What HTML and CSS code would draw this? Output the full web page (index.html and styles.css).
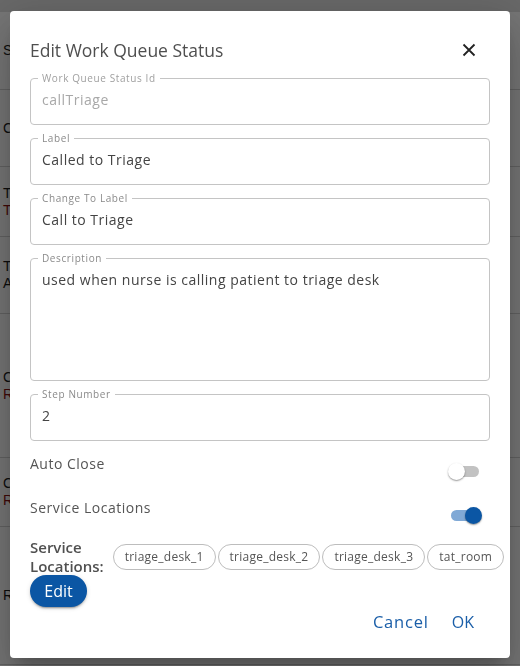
FILE: index.html
```html
<!DOCTYPE html>
<html>
<head>
<meta charset="utf-8">
<link rel="stylesheet" href="styles.css">
</head>
<body>
<div class="page">
  <div class="page-header"></div>
  <div class="row r1"><span>S</span></div>
  <div class="row r2"><span>C</span></div>
  <div class="row r3"><span>T</span><span class="red">T</span></div>
  <div class="row r4"><span>T</span><span>A</span></div>
  <div class="row r5"><span>C</span><span class="red">R</span></div>
  <div class="row r6"><span>C</span><span class="red">R</span></div>
  <div class="row r7"><span>R</span></div>
</div>
<div class="backdrop"></div>
<div class="dialog">
  <div class="dialog-title">
    <h2>Edit Work Queue Status</h2>
    <svg class="close" width="14" height="14" viewBox="0 0 14 14"><path d="M1.5 1.5L12.5 12.5M12.5 1.5L1.5 12.5" stroke="#222" stroke-width="1.8" fill="none"/></svg>
  </div>
  <div class="dialog-body">
    <fieldset class="field disabled">
      <legend>Work Queue Status Id</legend>
      <div class="value">callTriage</div>
    </fieldset>
    <fieldset class="field">
      <legend>Label</legend>
      <div class="value">Called to Triage</div>
    </fieldset>
    <fieldset class="field">
      <legend>Change To Label</legend>
      <div class="value">Call to Triage</div>
    </fieldset>
    <fieldset class="field">
      <legend>Description</legend>
      <div class="value multiline">used when nurse is calling patient to triage desk</div>
    </fieldset>
    <fieldset class="field">
      <legend>Step Number</legend>
      <div class="value">2</div>
    </fieldset>
    <div class="toggle-row first">
      <span class="toggle-label">Auto Close</span>
      <div class="switch"><div class="track"><div class="thumb"></div></div></div>
    </div>
    <div class="toggle-row">
      <span class="toggle-label">Service Locations</span>
      <div class="switch on"><div class="track"><div class="thumb"></div></div></div>
    </div>
    <div class="locations">
      <div class="loc-label">Service<br>Locations:</div>
      <div class="chips">
        <span class="chip">triage_desk_1</span>
        <span class="chip">triage_desk_2</span>
        <span class="chip">triage_desk_3</span>
        <span class="chip">tat_room</span>
      </div>
    </div>
    <button class="edit-btn">Edit</button>
  </div>
  <div class="actions">
    <button class="text-btn cancel">Cancel</button>
    <button class="text-btn">OK</button>
  </div>
</div>
</body>
</html>
```
FILE: styles.css
```css
html, body {
  margin: 0;
  padding: 0;
  width: 520px;
  height: 666px;
  overflow: hidden;
  background: #ffffff;
}
.page {
  font-family: "Liberation Sans", Arial, sans-serif;
  font-size: 14px;
  color: #1a1a1a;
}
.page-header {
  height: 12px;
  background: #e2e2e2;
}
.row {
  display: flex;
  flex-direction: column;
  justify-content: center;
  padding-left: 3px;
  border-bottom: 1px solid #d4d4d4;
  line-height: 17px;
  white-space: nowrap;
}
.row .red { color: #8a1010; }
.r1 { height: 77px; }
.r2 { height: 76px; }
.r3 { height: 69px; }
.r4 { height: 76px; }
.r5 { height: 143px; }
.r6 { height: 68px; }
.r7 { height: 137px; }

.backdrop {
  position: fixed;
  inset: 0;
  background: rgba(0, 0, 0, 0.54);
}
.dialog {
  position: fixed;
  left: 10px;
  top: 11px;
  width: 500px;
  height: 647px;
  background: #fff;
  border-radius: 4px;
  box-shadow: 0 11px 15px -7px rgba(0,0,0,0.2), 0 24px 38px 3px rgba(0,0,0,0.14), 0 9px 46px 8px rgba(0,0,0,0.12);
  font-family: "Open Sans", "Noto Sans", sans-serif;
  color: #555;
  box-sizing: border-box;
  display: flex;
  flex-direction: column;
}
.dialog-title {
  display: flex;
  align-items: center;
  justify-content: space-between;
  padding: 27px 34px 0 20px;
}
.dialog-title h2 {
  margin: 0;
  font-size: 17.5px;
  line-height: 24px;
  font-weight: 500;
  color: #4f4f4f;
}
.close { display: block; }
.dialog-body {
  padding: 10px 20px 0 20px;
  display: flex;
  flex-direction: column;
}
.field {
  margin: 0 0 7px 0;
  padding: 0 11px;
  border: 1px solid #c4c4c4;
  border-radius: 4px;
  min-width: 0;
}
.field legend {
  font-size: 10px;
  line-height: 12px;
  padding: 0 4px;
  margin-left: -4px;
  color: #8a8a8a;
  letter-spacing: 0.6px;
}
.field.disabled legend { color: #a0a0a0; }
.value {
  font-size: 14px;
  line-height: 24px;
  padding: 4px 0 12px 0;
  color: #444;
  letter-spacing: 0.5px;
}
.field.disabled .value { color: #a8a8a8; }
.value.multiline { padding-bottom: 88px; }
.field:last-of-type { margin-bottom: 0; }

.toggle-row {
  display: flex;
  justify-content: space-between;
  align-items: flex-start;
  margin-top: 16px;
  padding-right: 8px;
}
.toggle-row.first { margin-top: 11px; }
.toggle-label {
  font-size: 14px;
  line-height: 24px;
  color: #555;
  letter-spacing: 0.5px;
}
.switch {
  margin-top: 11px;
  width: 34px;
  height: 17px;
  display: flex;
  align-items: center;
}
.track {
  width: 28px;
  height: 11px;
  margin: 0 3px;
  border-radius: 6px;
  background: #c2c2c2;
  display: flex;
  align-items: center;
}
.thumb {
  flex-shrink: 0;
  width: 17px;
  height: 17px;
  border-radius: 50%;
  background: #fff;
  margin-left: -3px;
  box-shadow: 0 1px 2px rgba(0,0,0,0.3), 0 1px 1px rgba(0,0,0,0.14);
}
.switch.on .track {
  background: #80a9d6;
  justify-content: flex-end;
}
.switch.on .thumb {
  background: #0b56a4;
  margin-left: 0;
  margin-right: -3px;
}
.locations {
  display: flex;
  align-items: center;
  margin-top: 14px;
  width: 480px;
}
.loc-label {
  font-size: 15px;
  line-height: 19px;
  font-weight: 600;
  color: #505050;
  margin-right: 9px;
}
.chips {
  display: flex;
  gap: 2px;
  white-space: nowrap;
}
.chip {
  display: inline-block;
  height: 24px;
  line-height: 24px;
  padding: 0 11px;
  border: 1px solid #bdbdbd;
  border-radius: 13px;
  font-size: 12px;
  color: #555;
  letter-spacing: 0.25px;
}
.edit-btn {
  align-self: flex-start;
  margin-top: -1px;
  height: 32px;
  width: 57px;
  border: none;
  border-radius: 16px;
  background: #0b56a4;
  color: #fff;
  font-family: "Open Sans", "Noto Sans", sans-serif;
  font-size: 16px;
  font-weight: 500;
  padding: 0;
  box-shadow: 0 3px 1px -2px rgba(0,0,0,0.2), 0 2px 2px rgba(0,0,0,0.14), 0 1px 5px rgba(0,0,0,0.12);
}
.actions {
  display: flex;
  justify-content: flex-end;
  gap: 7px;
  padding: 3px 28px 0 0;
}
.text-btn {
  background: none;
  border: none;
  padding: 0 8px;
  line-height: 24px;
  font-family: "Open Sans", "Noto Sans", sans-serif;
  font-size: 16px;
  color: #1a5ea8;
}
.text-btn.cancel {
  font-size: 16.5px;
  letter-spacing: 0.8px;
}
```
